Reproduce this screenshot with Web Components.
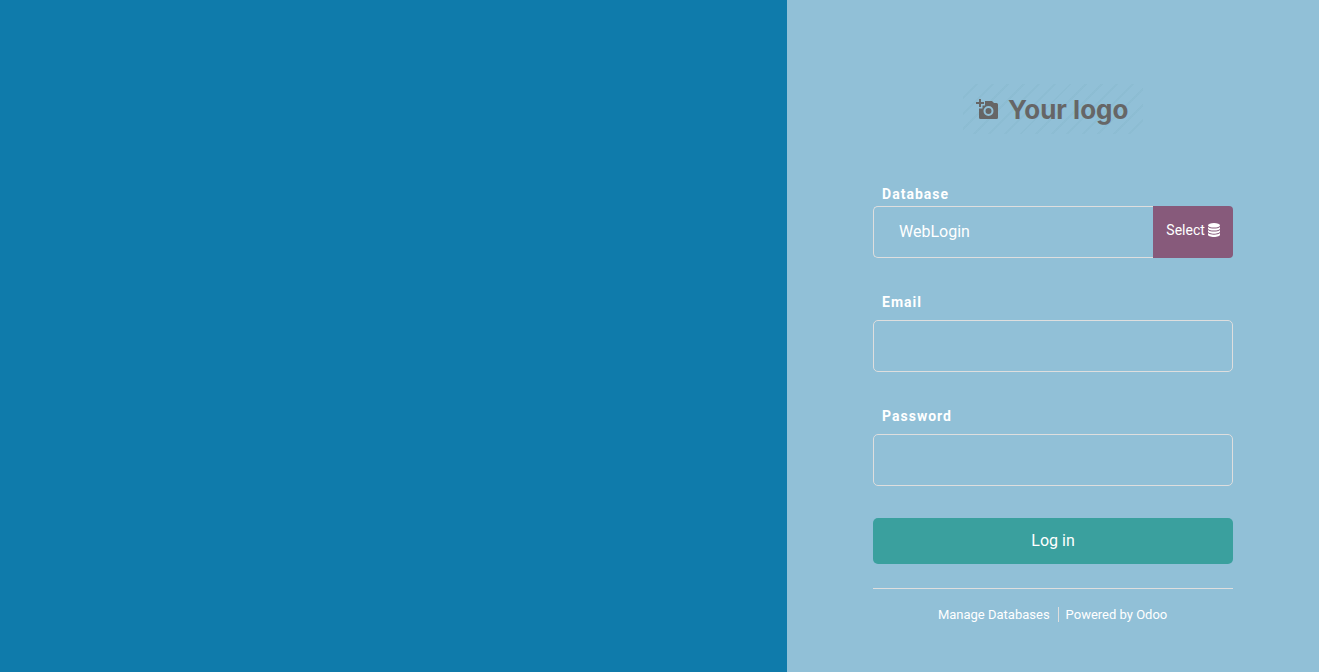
<!DOCTYPE html>
<html lang="en">
<head>
<meta charset="utf-8">
<meta name="viewport" content="width=device-width, initial-scale=1">
<title>Log in</title>
<style>
  body { margin: 0; font-family: Roboto, sans-serif; font-size: 16px; color: #fff; }
</style>
</head>
<body>
<login-page></login-page>

<template id="login-page">
  <style>
    :host { display: grid; grid-template-columns: 37fr 25fr; min-height: 100vh; background: #0f7bab; }
    main { grid-column: 2; box-sizing: border-box; background: #91c0d7; padding: 84px 24px 48px; }
    .card { max-width: 360px; margin: 0 auto; }
    form { margin: 50px 0 24px; }
    .select {
      box-sizing: border-box; width: 80px; border: 0; padding: 0 0 4px; margin: 0;
      display: flex; align-items: center; justify-content: center; gap: 3px;
      background: #875a7b; color: #fff; font: 14px Roboto, sans-serif; border-radius: 0 4px 4px 0;
    }
    .submit {
      display: block; width: 100%; height: 46px; margin-top: 32px; padding: 0 0 2px; border: 0;
      border-radius: 5px; background: #3aa09e; color: #fff; font: 16px Roboto, sans-serif;
    }
  </style>
  <main>
    <div class="card">
      <brand-logo>Your logo</brand-logo>
      <form>
        <form-field label="Database" value="WebLogin" compact>
          <button slot="action" class="select" type="button">Select
            <svg width="12" height="14" viewBox="0 0 13 14" preserveAspectRatio="none" fill="#fff" aria-hidden="true">
              <ellipse cx="6.500" cy="2.300" rx="6.500" ry="2.300"/>
              <path d="M0 3.900c1.300 1.100 3.700 1.600 6.500 1.600s5.200-.5 6.500-1.600v1.500c0 1.200-2.800 2.200-6.500 2.200S0 6.600 0 5.400z"/>
              <path d="M0 7c1.300 1.100 3.700 1.600 6.500 1.600s5.200-.5 6.500-1.600v1.500c0 1.200-2.800 2.200-6.500 2.200S0 9.700 0 8.500z"/>
              <path d="M0 10.100c1.300 1.100 3.700 1.600 6.500 1.600s5.200-.5 6.500-1.600v1.600c0 1.200-2.800 2.200-6.500 2.200S0 12.900 0 11.700z"/>
            </svg>
          </button>
        </form-field>
        <form-field label="Email" type="email"></form-field>
        <form-field label="Password" type="password"></form-field>
        <button class="submit" type="submit">Log in</button>
      </form>
      <footer-links>
        <a href="#databases">Manage Databases</a>
        <a href="#odoo">Powered by Odoo</a>
      </footer-links>
    </div>
  </main>
</template>

<template id="brand-logo">
  <style>
    :host {
      display: flex; align-items: center; box-sizing: border-box; gap: 10px;
      width: 180px; height: 50px; padding: 2px 0 0 13px; margin: 0 auto;
      color: #666; font: 700 26px/32px Inter, sans-serif; white-space: nowrap;
      background: repeating-linear-gradient(135deg, transparent 0 9px, rgba(90, 150, 160, .08) 9px 11px);
    }
    svg { flex: none; }
  </style>
  <svg width="22" height="22" viewBox="0 0 22 22" fill="#666" aria-hidden="true">
    <path d="M3 0h2v3h3v2H5v3H3V5H0V3h3z"/>
    <path fill-rule="evenodd" d="M9 2h7l2 2h2.500q1.500 0 1.500 1.500v13q0 1.500-1.500 1.500h-16Q3 20 3 18.500V9.500h3.500V6.500H9zM12.500 7a5 5 0 1 0 0 10 5 5 0 1 0 0-10zM12.500 9a3 3 0 1 1 0 6 3 3 0 1 1 0-6z"/>
  </svg>
  <slot></slot>
</template>

<template id="form-field">
  <style>
    :host { display: block; }
    :host(:not([compact])) { margin-top: 34px; }
    label { display: block; width: max-content; margin: 0 9px 8px; font-size: 14px; line-height: 20px; font-weight: 700; letter-spacing: 1px; }
    :host([compact]) label { margin-bottom: 2px; }
    .row { display: flex; }
    input {
      flex: 1; min-width: 0; box-sizing: border-box; height: 52px; margin: 0; padding: 0 25px 2px;
      border: 1px solid #dedede; border-radius: 5px; background: transparent; color: #fff;
      font: 16px Roboto, sans-serif; outline: none;
    }
    :host([compact]) input { border-right: 0; border-radius: 5px 0 0 5px; }
  </style>
  <label for="control"></label>
  <div class="row"><input id="control"><slot name="action"></slot></div>
</template>

<template id="footer-links">
  <style>
    :host { display: flex; justify-content: center; border-top: 1px solid #dedede; padding-top: 18px; font-size: 13px; line-height: 15px; }
    ::slotted(a) { color: #fff; text-decoration: none; padding: 0 8px 0 7px; }
    ::slotted(a:first-child) { border-right: 1px solid #dedede; }
  </style>
  <slot></slot>
</template>

<script>
  class TemplateElement extends HTMLElement {
    constructor() {
      super();
      this.attachShadow({ mode: 'open' });
      const template = document.getElementById(this.localName);
      this.shadowRoot.append(template.content.cloneNode(true));
    }
  }
  class FormField extends TemplateElement {
    connectedCallback() {
      const input = this.shadowRoot.querySelector('input');
      this.shadowRoot.querySelector('label').textContent = this.getAttribute('label');
      input.type = this.getAttribute('type') || 'text';
      input.value = this.getAttribute('value') || '';
    }
  }
  customElements.define('brand-logo', class extends TemplateElement {});
  customElements.define('form-field', FormField);
  customElements.define('footer-links', class extends TemplateElement {});
  customElements.define('login-page', class extends TemplateElement {});
</script>
</body>
</html>
